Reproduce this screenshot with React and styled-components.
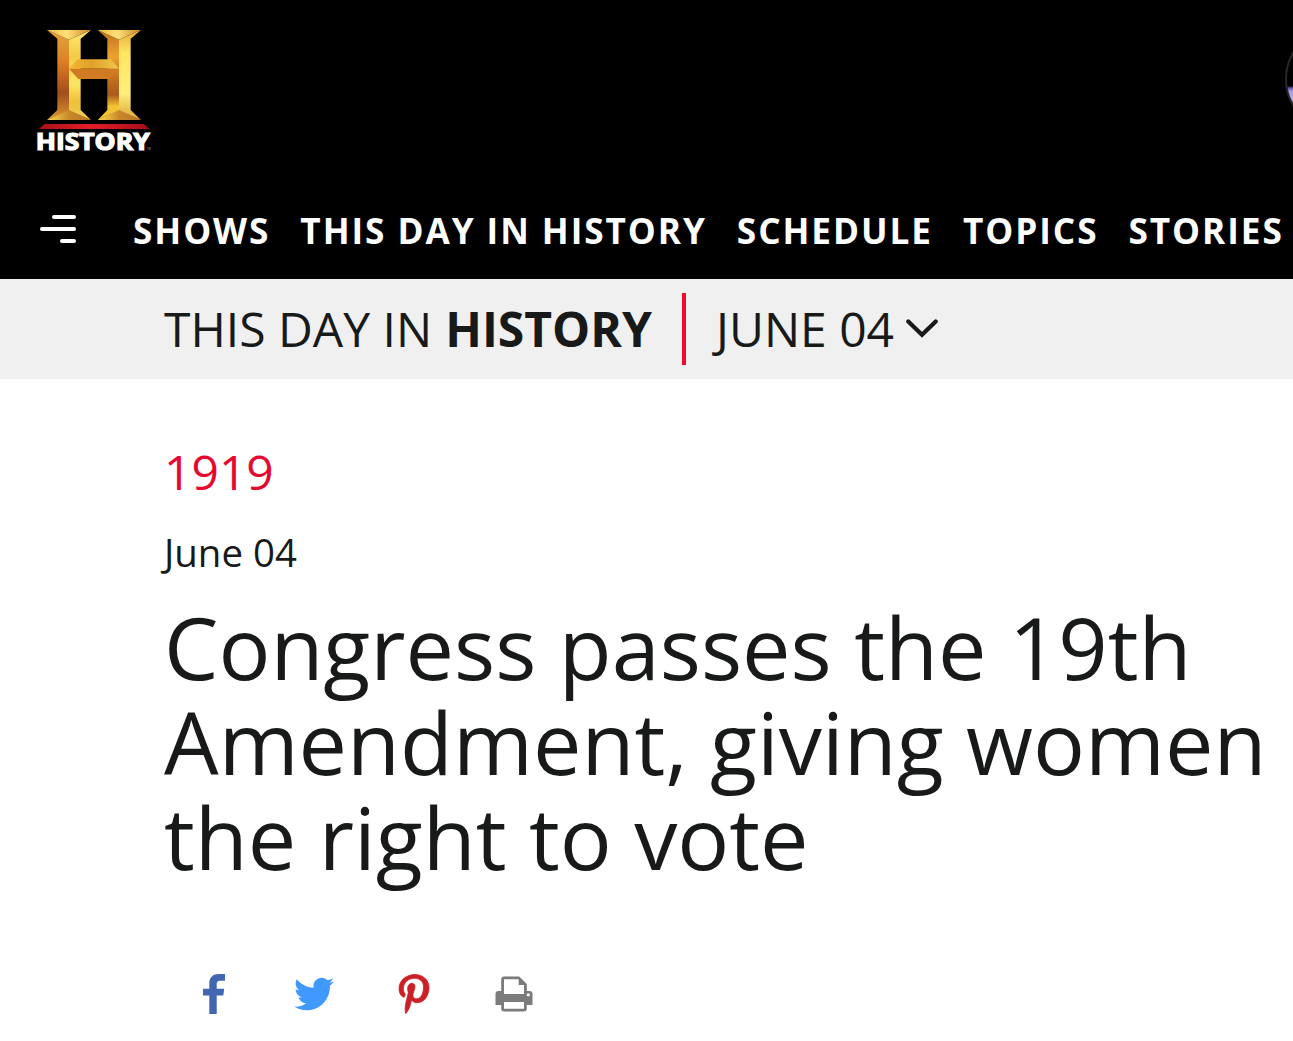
import React from 'react';
import styled, { createGlobalStyle } from 'styled-components';
import { FaTwitter, FaPinterestP } from 'react-icons/fa';

const GlobalStyle = createGlobalStyle`
  * { box-sizing: border-box; }
  body {
    margin: 0;
    background: #fff;
    color: #181919;
    font-family: "Open Sans", "Noto Sans", sans-serif;
    overflow: hidden;
  }
`;

const Page = styled.div`
  width: 1293px;
  height: 1041px;
  overflow: hidden;
`;

const Header = styled.header`
  display: flex;
  flex-direction: column;
  height: 279px;
  background: #000;
`;

const Masthead = styled.div`
  display: flex;
  justify-content: space-between;
  height: 182px;
  padding: 20px 0 0 25px;
`;

const LogoArt = styled.svg`
  width: 140px;
  height: 140px;
`;

const AvatarWindow = styled.div`
  width: 8px;
  height: 104px;
  margin-top: 7px;
  overflow: hidden;
`;

const Avatar = styled.div`
  width: 104px;
  height: 104px;
  border: 2px solid #2c2624;
  border-radius: 50%;
  background: linear-gradient(#000 0 57px, #6550b4 59px, #a49be0 62px, #b5b0ea 72px, #7470b0 78px, #000 82px);
`;

const Nav = styled.nav`
  display: flex;
  align-items: center;
  height: 97px;
  padding: 0 0 0 40px;
`;

const MenuButton = styled.button`
  display: flex;
  flex-direction: column;
  align-items: flex-end;
  gap: 8px;
  width: 36px;
  margin: 0 57px 3px 0;
  padding: 0;
  border: 0;
  background: none;
`;

const MenuBar = styled.span`
  width: ${(p) => p.$width}px;
  height: 4px;
  border-radius: 2px;
  background: #fff;
`;

const NavLinks = styled.div`
  display: flex;
  gap: 30px;
  padding-bottom: 2px;
`;

const NavLink = styled.a`
  color: #fff;
  font-size: 35.2px;
  font-weight: 700;
  line-height: 48px;
  letter-spacing: 1.93px;
  white-space: nowrap;
`;

const DayBar = styled.section`
  display: flex;
  align-items: center;
  height: 100px;
  padding-left: 164px;
  background: #f0f0f0;
  font-size: 48px;
  line-height: 64px;
  white-space: nowrap;
`;

const DayTitle = styled.div`
  width: 518px;
`;

const DayTitleStrong = styled.b`
  margin-left: 0.7px;
`;

const Divider = styled.div`
  width: 4px;
  height: 72px;
  margin-right: 30px;
  background: #ee0c2d;
`;

const DatePicker = styled.div`
  display: flex;
  align-items: center;
  gap: 12px;
`;

const Chevron = styled.svg`
  width: 32px;
  height: 20px;
`;

const Article = styled.main`
  display: flex;
  flex-direction: column;
  padding: 61px 0 0 164px;
`;

const Year = styled.div`
  color: #e6092f;
  font-size: 48px;
  line-height: 64px;
`;

const DateLine = styled.div`
  margin-top: 22px;
  font-size: 38.4px;
  line-height: 52px;
`;

const Headline = styled.h1`
  margin: 21px 0 0;
  font-size: 86.4px;
  font-weight: 400;
  line-height: 95.04px;
`;

const HeadlineLine = styled.span`
  display: block;
  white-space: nowrap;
`;

const ShareRow = styled.div`
  display: flex;
  margin-top: 60px;
`;

const ShareButton = styled.a`
  display: flex;
  align-items: center;
  justify-content: center;
  width: 100px;
  height: 100px;
  color: ${(p) => p.$color};
`;

const PinterestIcon = styled(FaPinterestP)`
  stroke: currentColor;
  stroke-width: 10px;
`;

function Logo() {
  return (
    <LogoArt viewBox="0 0 420 420" aria-label="History">
      <defs>
        <linearGradient id="shade" x2="0" y2="1">
          <stop offset="0" stopColor="#eba23a" />
          <stop offset=".22" stopColor="#dc922c" />
          <stop offset=".38" stopColor="#dc7a22" />
          <stop offset=".7" stopColor="#a04d1c" />
          <stop offset="1" stopColor="#dc9a30" />
        </linearGradient>
        <linearGradient id="shadeRight" x2="0" y2="1">
          <stop offset="0" stopColor="#c07020" />
          <stop offset=".3" stopColor="#eda22f" />
          <stop offset=".5" stopColor="#c8741f" />
          <stop offset=".72" stopColor="#a95a1c" />
          <stop offset=".85" stopColor="#f3c531" />
          <stop offset="1" stopColor="#eebd35" />
        </linearGradient>
        <linearGradient id="light" x2="0" y2="1">
          <stop offset="0" stopColor="#ffe96e" />
          <stop offset=".3" stopColor="#f5cb45" />
          <stop offset=".6" stopColor="#fce664" />
          <stop offset=".8" stopColor="#eebf3b" />
          <stop offset="1" stopColor="#f5d053" />
        </linearGradient>
        <linearGradient id="lightRight" x2="0" y2="1">
          <stop offset="0" stopColor="#e6ac35" />
          <stop offset=".25" stopColor="#ffe563" />
          <stop offset=".7" stopColor="#fff07b" />
          <stop offset="1" stopColor="#dca437" />
        </linearGradient>
        <linearGradient id="cap">
          <stop offset="0" stopColor="#eeb843" />
          <stop offset=".45" stopColor="#ffe079" />
          <stop offset="1" stopColor="#c98429" />
        </linearGradient>
        <linearGradient id="foot">
          <stop offset="0" stopColor="#ffdc55" />
          <stop offset=".5" stopColor="#c98729" />
          <stop offset="1" stopColor="#b8752a" />
        </linearGradient>
        <linearGradient id="beam">
          <stop offset="0" stopColor="#f6b731" />
          <stop offset=".45" stopColor="#dfa029" />
          <stop offset="1" stopColor="#f3c84c" />
        </linearGradient>
        <linearGradient id="stripe">
          <stop offset="0" stopColor="#a91117" />
          <stop offset=".45" stopColor="#e51d25" />
          <stop offset="1" stopColor="#a60e18" />
        </linearGradient>
      </defs>
      <path d="M66 30L97 56V270L66 300L132 272V59Z" fill="url(#shade)" />
      <path d="M132 59L198 30L167 56V270L198 300L132 272Z" fill="url(#light)" />
      <path d="M66 30H198L132 59Z" fill="url(#cap)" />
      <path d="M66 300L132 270L198 300Z" fill="url(#foot)" />
      <path d="M218 30L247 56V270L218 300L282 272V59Z" fill="url(#shadeRight)" />
      <path d="M282 59L348 30L317 56V270L348 300L282 272Z" fill="url(#lightRight)" />
      <path d="M218 30H348L282 59Z" fill="url(#cap)" />
      <path d="M218 300L282 270L348 300Z" fill="url(#foot)" />
      <path d="M132 146L158 118H258L282 146Z" fill="url(#beam)" />
      <path d="M132 146H282L253 177H160Z" fill="#d07a22" />
      <path d="M59 312H356L374 327H41Z" fill="url(#stripe)" />
      <text x="32" y="390" textLength="342" lengthAdjust="spacingAndGlyphs" fill="#fff" stroke="#fff" strokeWidth="3.5" fontFamily="Open Sans, sans-serif" fontWeight="700" fontSize="67">HISTORY</text>
      <text x="366" y="391" fill="#999" fontFamily="Liberation Sans, sans-serif" fontSize="8">TM</text>
    </LogoArt>
  );
}

const FacebookIcon = () => (
  <svg width="22" height="40" viewBox="0 0 22 40" fill="currentColor">
    <path d="M6.3 40V21.6H0V14.8H6.3V9.5C6.3 3.2 10 0 16 0H22V6.8H17.8C14.5 6.8 13.7 8.2 13.7 10.7V14.8H21.2L20.3 21.6H13.7V40Z" />
  </svg>
);

const PrinterIcon = () => (
  <svg width="38" height="36" viewBox="0 0 38 36" fill="currentColor">
    <path fillRule="evenodd" d="M9 .5H24.2L31.8 8V15H34.5C36.5 15 37.5 16.2 37.5 18V29H31.8V32.5C31.8 34.5 30.8 35.5 29 35.5H9C7.1 35.5 6.2 34.5 6.2 32.5V29H.5V18C.5 16.2 1.5 15 3.5 15H6.2V3.5C6.2 1.5 7.2 .5 9 .5ZM9 3.2V18H29V9H23.7V3.2ZM9 26V32.7H29V26ZM33.3 17.2A1.6 1.6 0 1 0 33.3 20.4A1.6 1.6 0 1 0 33.3 17.2Z" />
  </svg>
);

const links = ['SHOWS', 'THIS DAY IN HISTORY', 'SCHEDULE', 'TOPICS', 'STORIES'];

export default function App() {
  return (
    <Page>
      <GlobalStyle />
      <Header>
        <Masthead>
          <Logo />
          <AvatarWindow><Avatar /></AvatarWindow>
        </Masthead>
        <Nav>
          <MenuButton aria-label="Menu">
            <MenuBar $width={24} />
            <MenuBar $width={36} />
            <MenuBar $width={16} />
          </MenuButton>
          <NavLinks>
            {links.map((label) => <NavLink key={label}>{label}</NavLink>)}
          </NavLinks>
        </Nav>
      </Header>
      <DayBar>
        <DayTitle>THIS DAY IN <DayTitleStrong>HISTORY</DayTitleStrong></DayTitle>
        <Divider />
        <DatePicker>
          JUNE 04
          <Chevron viewBox="0 0 32 20" fill="none" stroke="#181919" strokeWidth="4.2" strokeLinecap="round">
            <path d="M2.3 2.5L16 15.8L29.7 2.5" />
          </Chevron>
        </DatePicker>
      </DayBar>
      <Article>
        <Year>1919</Year>
        <DateLine>June 04</DateLine>
        <Headline>
          <HeadlineLine>Congress passes the 19th</HeadlineLine>
          <HeadlineLine>Amendment, giving women</HeadlineLine>
          <HeadlineLine>the right to vote</HeadlineLine>
        </Headline>
        <ShareRow>
          <ShareButton $color="#4267b2" aria-label="Facebook"><FacebookIcon /></ShareButton>
          <ShareButton $color="#4099ff" aria-label="Twitter"><FaTwitter size={40} /></ShareButton>
          <ShareButton $color="#cb2027" aria-label="Pinterest"><PinterestIcon size={40} /></ShareButton>
          <ShareButton $color="#7b7b7b" aria-label="Print"><PrinterIcon /></ShareButton>
        </ShareRow>
      </Article>
    </Page>
  );
}
